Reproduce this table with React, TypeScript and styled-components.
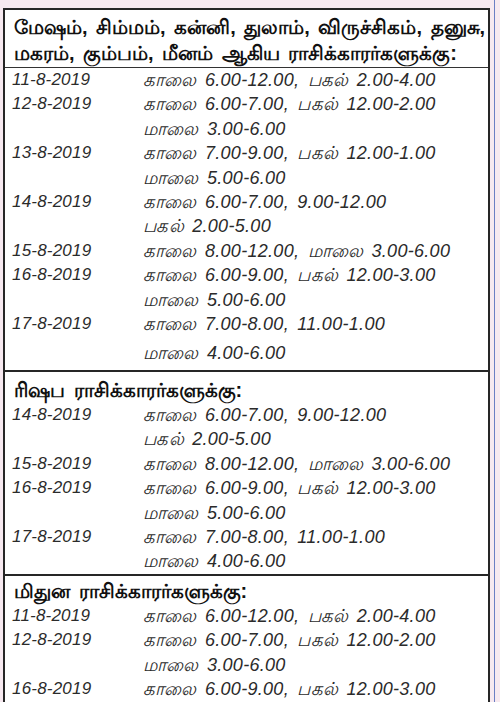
import { createGlobalStyle } from 'styled-components';
import styled from 'styled-components';

const GlobalStyle = createGlobalStyle`
    html, body {
        margin: 0;
        padding: 0;
        background: #f7e9f0;
    }
    body {
        font-family: "Liberation Sans", "Noto Sans", sans-serif;
    }
`;

const Page = styled.div`
    width: 495px;
    height: 702px;
    box-sizing: border-box;
    padding: 8px 0 0 3px;
    border-right: 1px solid #6b7fc4;
    overflow: hidden;
`;

const Table = styled.div`
    width: 487px;
    box-sizing: border-box;
    background: #ffffff;
    border: 2px solid #262626;
    border-bottom: none;
`;

const Section = styled.div<{ $last?: boolean }>`
    border-bottom: ${p => (p.$last ? 'none' : '2px solid #262626')};
`;

const Header = styled.div<{ $ruled?: boolean; $top: number }>`
    padding: ${p => p.$top}px 4px ${p => (p.$ruled ? 1 : 0)}px 9px;
    border-bottom: ${p => (p.$ruled ? '1px solid #333' : 'none')};
    font-size: 20px;
    font-weight: bold;
    line-height: 26px;
    color: #111;
    word-spacing: 3px;
    white-space: nowrap;
`;

const Body = styled.div<{ $bottom: number }>`
    padding-bottom: ${p => p.$bottom}px;
`;

const Row = styled.div`
    display: grid;
    grid-template-columns: 131px 1fr;
    padding-left: 7px;
    font-size: 17px;
    font-style: italic;
    line-height: 24.4px;
    color: #2b2b2b;
`;

const DateCell = styled.div`
    letter-spacing: 0.2px;
`;

const TimeCell = styled.div`
    white-space: nowrap;
    font-size: 18px;
    letter-spacing: 0.3px;
    word-spacing: 3px;
`;

const TimeLine = styled.div<{ $gap?: number }>`
    margin-top: ${p => p.$gap || 0}px;
`;

type Slot = { date: string; lines: string[]; gap?: number };
type Group = { title: string[]; top: number; bottom: number; ruled?: boolean; rows: Slot[] };

const groups: Group[] = [
    {
        title: [
            'மேஷம், சிம்மம், கன்னி, துலாம், விருச்சிகம், தனுசு,',
            'மகரம், கும்பம், மீனம் ஆகிய ராசிக்காரர்களுக்கு:',
        ],
        top: 4,
        bottom: 4,
        ruled: true,
        rows: [
            { date: '11-8-2019', lines: ['காலை 6.00-12.00, பகல் 2.00-4.00'] },
            { date: '12-8-2019', lines: ['காலை 6.00-7.00, பகல் 12.00-2.00', 'மாலை 3.00-6.00'] },
            { date: '13-8-2019', lines: ['காலை 7.00-9.00, பகல் 12.00-1.00', 'மாலை 5.00-6.00'] },
            { date: '14-8-2019', lines: ['காலை 6.00-7.00, 9.00-12.00', 'பகல் 2.00-5.00'] },
            { date: '15-8-2019', lines: ['காலை 8.00-12.00, மாலை 3.00-6.00'] },
            { date: '16-8-2019', lines: ['காலை 6.00-9.00, பகல் 12.00-3.00', 'மாலை 5.00-6.00'] },
            { date: '17-8-2019', lines: ['காலை 7.00-8.00, 11.00-1.00', 'மாலை 4.00-6.00'], gap: 5 },
        ],
    },
    {
        title: ['ரிஷப ராசிக்காரர்களுக்கு:'],
        top: 5,
        bottom: 0,
        rows: [
            { date: '14-8-2019', lines: ['காலை 6.00-7.00, 9.00-12.00', 'பகல் 2.00-5.00'] },
            { date: '15-8-2019', lines: ['காலை 8.00-12.00, மாலை 3.00-6.00'] },
            { date: '16-8-2019', lines: ['காலை 6.00-9.00, பகல் 12.00-3.00', 'மாலை 5.00-6.00'] },
            { date: '17-8-2019', lines: ['காலை 7.00-8.00, 11.00-1.00', 'மாலை 4.00-6.00'] },
        ],
    },
    {
        title: ['மிதுன ராசிக்காரர்களுக்கு:'],
        top: 2,
        bottom: 0,
        rows: [
            { date: '11-8-2019', lines: ['காலை 6.00-12.00, பகல் 2.00-4.00'] },
            { date: '12-8-2019', lines: ['காலை 6.00-7.00, பகல் 12.00-2.00', 'மாலை 3.00-6.00'] },
            { date: '16-8-2019', lines: ['காலை 6.00-9.00, பகல் 12.00-3.00', 'மாலை 5.00-6.00'] },
        ],
    },
];

export default function App() {
    return (
        <>
            <GlobalStyle />
            <Page>
                <Table>
                    {groups.map((g, gi) => (
                        <Section key={gi} $last={gi === groups.length - 1}>
                            <Header $ruled={g.ruled} $top={g.top}>
                                {g.title.map((t, ti) => (
                                    <div key={ti}>{t}</div>
                                ))}
                            </Header>
                            <Body $bottom={g.bottom}>
                                {g.rows.map((r, ri) => (
                                    <Row key={ri}>
                                        <DateCell>{r.date}</DateCell>
                                        <TimeCell>
                                            {r.lines.map((l, li) => (
                                                <TimeLine key={li} $gap={li > 0 ? r.gap : 0}>
                                                    {l}
                                                </TimeLine>
                                            ))}
                                        </TimeCell>
                                    </Row>
                                ))}
                            </Body>
                        </Section>
                    ))}
                </Table>
            </Page>
        </>
    );
}
